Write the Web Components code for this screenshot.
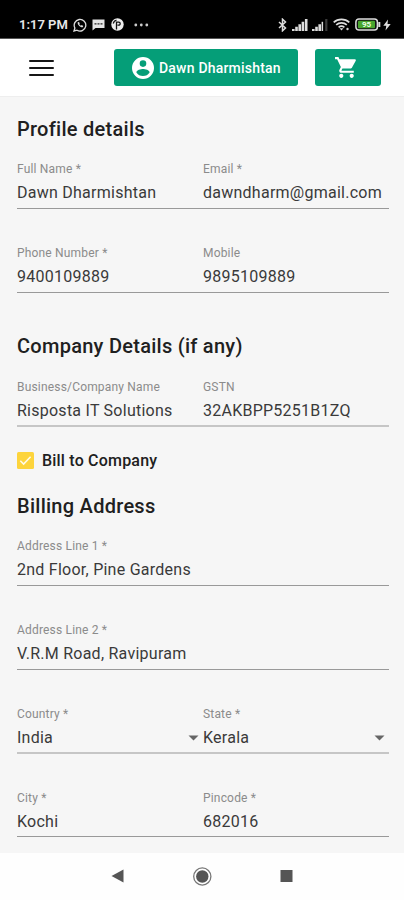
<!DOCTYPE html>
<html lang="en">
<head>
<meta charset="utf-8">
<title>Profile details</title>
<style>
html,body{margin:0;padding:0;background:#fff}
body{width:404px;height:900px;overflow:hidden;font-family:Roboto,"Liberation Sans",sans-serif}
</style>
</head>
<body>
<profile-page></profile-page>
<script>
function define(name, html, setup) {
  const template = document.createElement('template');
  template.innerHTML = html;
  customElements.define(name, class extends HTMLElement {
    constructor() {
      super();
      this.attachShadow({ mode: 'open' }).append(template.content.cloneNode(true));
    }
    connectedCallback() { if (setup) setup(this, this.shadowRoot); }
  });
}

define('status-bar', `
<style>
:host{display:flex;box-sizing:border-box;height:39px;padding:11px 13px 0 19px;background:#000;color:#e8e8e8;align-items:flex-start;border-bottom:1px solid #555}
svg{display:block;flex:none}
.time{font-size:13px;font-weight:600;line-height:28px;height:28px;width:49px;white-space:nowrap}
.icons{display:flex;align-items:center;height:27px}
.right{margin-left:auto}
</style>
<span class="time">1:17 PM</span>
<div class="icons">
  <svg style="margin-left:5px" width="14" height="14" viewBox="0 0 14 14" fill="none" stroke="#ddd"><path d="M1 13l.9-3A5.8 5.8 0 1 1 4 12.200z" stroke-width="1.300"/><path d="M4.700 4.200c-.5 2.300 2.500 5.400 5 5l.6-1.200-1.600-.9-.8.7c-.8-.4-1.300-1-1.700-1.700l.6-.7-.8-1.500z" fill="#ddd" stroke="none"/></svg>
  <svg style="margin-left:5px" width="13" height="12" viewBox="0 0 13 12"><path d="M.5.500h12V9H3.500L.5 11.500z" fill="#e4e4e4"/><path d="M2.500 4.800h8" stroke="#222" stroke-width="1.300" stroke-dasharray="2 1"/></svg>
  <svg style="margin-left:6px" width="13" height="13" viewBox="0 0 13 13"><circle cx="6.500" cy="6.500" r="6.200" fill="#eee"/><path d="M5.500 11.500V4.200h2.200a1.500 1.500 0 0 1 0 3H6.500M2.200 5.500A4.600 4.600 0 0 1 5.500 2.200" fill="none" stroke="#111" stroke-width="1.300"/></svg>
  <svg style="margin-left:10px" width="15" height="4" viewBox="0 0 15 4" fill="#ccc"><circle cx="1.800" cy="2" r="1.400"/><circle cx="7.300" cy="2" r="1.400"/><circle cx="12.800" cy="2" r="1.400"/></svg>
</div>
<div class="icons right">
  <svg width="9" height="14" viewBox="0 0 9 14" fill="none" stroke="#ddd" stroke-width="1.500"><path d="M1 4l6.500 6L4.500 12.800V1.200L7.500 4 1 10"/></svg>
  <svg style="margin-left:5px" width="16" height="12" viewBox="0 0 16 12" fill="#ddd"><path d="M0 10h2.600v2H0zM3.200 7.800h2.600V12H3.200zM6.400 5.300H9V12H6.400zM9.600 2.800h2.600V12H9.600zM12.900 0h2.600v12h-2.600z"/></svg>
  <svg style="margin-left:4px" width="16" height="12" viewBox="0 0 16 12" fill="#ddd"><path d="M0 10h2.600v2H0zM3.200 7.800h2.600V12H3.200zM6.400 5.300H9V12H6.400z"/><path d="M9.600 2.800h1.500V12H9.600z"/><path d="M13.200 0h2.200v12h-2.200z" fill="#3c3c3c"/></svg>
  <svg style="margin-left:5px" width="17" height="13" viewBox="0 0 17 13" fill="none" stroke="#ddd" stroke-width="1.700"><path d="M.7 4.300c4.300-4 11.300-4 15.600 0M3.200 6.900c3-2.700 7.600-2.700 10.600 0M5.600 9.300c1.800-1.500 4-1.500 5.800 0"/><path d="M8.500 12.500l-2-2.200h4z" fill="#ddd" stroke="none"/><circle cx="14.500" cy="11" r="1.200" fill="#ccc" stroke="none"/></svg>
  <svg style="margin-left:5px" width="26" height="13" viewBox="0 0 26 13"><rect x=".9" y=".9" width="21.500" height="11.200" rx="3" fill="#111" stroke="#ddd" stroke-width="1.500"/><rect x="3" y="2.800" width="17" height="7.400" rx="1" fill="#48a52d"/><path d="M24.300 4v5" stroke="#ddd" stroke-width="2"/><text x="11.500" y="9.400" font-family="Roboto,sans-serif" font-weight="700" font-size="8" text-anchor="middle" fill="#e9ffe0">95</text></svg>
  <svg style="margin-left:2px" width="8" height="12" viewBox="0 0 8 12"><path d="M5 .5L.3 6.800h3L2.500 11.500 7.700 5H4.500z" fill="#ddd"/></svg>
</div>`);

define('action-button', `
<style>
:host{display:flex;align-items:center;justify-content:center;box-sizing:border-box;height:37px;border-radius:3px;background:#059e78;color:#fff;font-size:14px;font-weight:500;line-height:20px;white-space:nowrap}
</style><slot></slot>`);

define('app-header', `
<style>
:host{display:flex;box-sizing:border-box;height:58px;padding:10px 23px 0 29px;background:#fff;border-bottom:1px solid #eee;align-items:flex-start}
.menu{display:grid;gap:5px;width:25px;margin:11px 60.400px 0 0}
.menu i{height:2px;background:#161616;border-radius:1px}
.user{width:184px}.cart{width:66px;margin-left:16.500px}
svg{flex:none}
.name{letter-spacing:.2px;margin-left:5px}
.cart svg{margin-right:2px}
</style>
<div class="menu"><i></i><i></i><i></i></div>
<action-button class="user">
  <svg width="22" height="22" viewBox="2 2 20 20" fill="#fff"><path d="M12 2a10 10 0 1 0 0 20 10 10 0 0 0 0-20zm0 3a3 3 0 1 1 0 6 3 3 0 0 1 0-6zm0 14.200a7.200 7.200 0 0 1-6-3.220c.03-1.990 4-3.080 6-3.080 1.990 0 5.970 1.090 6 3.080a7.200 7.200 0 0 1-6 3.220z"/></svg>
  <span class="name">Dawn Dharmishtan</span>
</action-button>
<action-button class="cart">
  <svg width="25" height="25" viewBox="0 0 24 24" fill="#fff"><path d="M7 18c-1.100 0-1.990.9-1.990 2S5.900 22 7 22s2-.9 2-2-.9-2-2-2zM1 2v2h2l3.600 7.590-1.350 2.450c-.16.280-.25.610-.25.960 0 1.100.9 2 2 2h12v-2H7.420c-.14 0-.25-.11-.25-.25l.03-.12.900-1.630h7.450c.75 0 1.410-.41 1.750-1.030l3.580-6.490A1 1 0 0 0 20 4H5.210l-.94-2H1zm16 16c-1.100 0-1.990.9-1.990 2s.89 2 1.990 2 2-.9 2-2-.9-2-2-2z"/></svg>
</action-button>`);

define('section-title', `
<style>:host{display:block;height:24px;line-height:24px;font-size:20px;font-weight:500;color:#202020;letter-spacing:.27px;white-space:nowrap}</style><slot></slot>`);

define('field-row', `
<style>
:host{display:grid;grid-template-columns:186px 186px;box-sizing:border-box;height:48px;margin-bottom:var(--gap,36px);border-bottom:1px solid #999}
:host([single]){grid-template-columns:372px}
:host([soft]){border-bottom:2px solid #c6c6c6}
</style><slot></slot>`);

define('form-field', `
<style>
:host{display:block;color:#3a3a3a}
.label{font-size:12px;line-height:14px;height:14px;padding-top:1px;color:#8b8b8b;letter-spacing:.18px;white-space:nowrap}
.value{display:flex;justify-content:space-between;align-items:center;margin-top:7px;font-size:16px;line-height:20px;height:20px;letter-spacing:.25px;white-space:nowrap}
svg{display:none;margin-right:4px}
:host([select]) svg{display:block}
</style>
<div class="label"></div>
<div class="value"><slot></slot><svg width="11" height="6" viewBox="0 0 11 6"><path d="M.5.500h10L5.500 5.500z" fill="#666"/></svg></div>`,
(host, root) => { root.querySelector('.label').textContent = host.getAttribute('label'); });

define('check-option', `
<style>
:host{display:flex;align-items:center;height:24px;font-size:16px;font-weight:500;color:#202020;letter-spacing:.2px;white-space:nowrap}
svg{margin-right:8px}
</style>
<svg width="17" height="17" viewBox="0 0 17 17"><rect width="17" height="17" rx="1.500" fill="#fdd43c"/><path d="M3.300 8.800l3.300 3.200 7-7.200" fill="none" stroke="#fffbe8" stroke-width="1.600"/></svg><slot></slot>`);

define('nav-bar', `
<style>
:host{display:flex;box-sizing:border-box;height:47px;background:#fefefe;padding-left:111px;align-items:center}
svg{display:block}
</style>
<svg width="13" height="15" viewBox="0 0 13 15"><path d="M.5 7L12.500.5v13z" fill="#555"/></svg>
<svg style="margin-left:68px" width="20" height="20" viewBox="0 0 20 20"><circle cx="10.300" cy="9.500" r="8.600" fill="#fff" stroke="#777" stroke-width="1.300"/><circle cx="10.300" cy="9.500" r="6.200" fill="#555"/></svg>
<svg style="margin-left:68px" width="13" height="13" viewBox="0 0 13 13"><rect x=".5" width="12" height="12" fill="#555"/></svg>`);

define('profile-page', `
<style>
:host{display:flex;flex-direction:column;width:404px;height:900px;background:#f6f6f6}
main{box-sizing:border-box;height:756px;padding:20px 15px 0 17px}
.profile{margin-bottom:20px}.company{margin:41px 0 21px}.bill{margin:21px 0 22px}.billing{margin-bottom:20px}
</style>
<status-bar></status-bar>
<app-header></app-header>
<main>
<section-title class="profile">Profile details</section-title>
<field-row><form-field label="Full Name *">Dawn Dharmishtan</form-field><form-field label="Email *">dawndharm@gmail.com</form-field></field-row>
<field-row style="--gap:0"><form-field label="Phone Number *">9400109889</form-field><form-field label="Mobile">9895109889</form-field></field-row>
<section-title class="company">Company Details (if any)</section-title>
<field-row soft style="--gap:0"><form-field label="Business/Company Name">Risposta IT Solutions</form-field><form-field label="GSTN">32AKBPP5251B1ZQ</form-field></field-row>
<check-option class="bill">Bill to Company</check-option>
<section-title class="billing">Billing Address</section-title>
<field-row single><form-field label="Address Line 1 *">2nd Floor, Pine Gardens</form-field></field-row>
<field-row single><form-field label="Address Line 2 *">V.R.M Road, Ravipuram</form-field></field-row>
<field-row soft><form-field select label="Country *">India</form-field><form-field select label="State *">Kerala</form-field></field-row>
<field-row style="--gap:0;height:47px"><form-field label="City *">Kochi</form-field><form-field label="Pincode *">682016</form-field></field-row>
</main>
<nav-bar></nav-bar>`);
</script>
</body>
</html>
